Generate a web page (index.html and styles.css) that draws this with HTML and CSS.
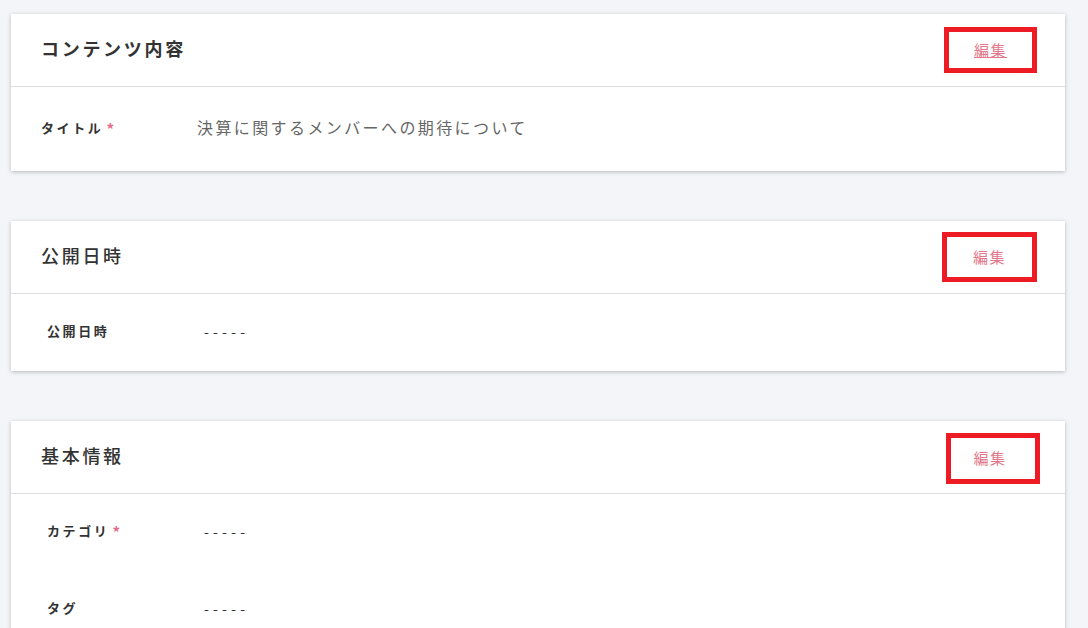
FILE: index.html
```html
<!DOCTYPE html>
<html lang="ja">
  <head>
    <meta charset="utf-8">
    <meta name="viewport" content="width=device-width, initial-scale=1.0">
    <title>コンテンツ編集</title>
    <link rel="stylesheet" href="styles.css">
  </head>
  <body>
    <div class="page">

      <!-- コンテンツ内容 -->
      <section class="card">
        <div class="card-header">
          <h2 class="card-title strong">コンテンツ内容</h2>
          <a class="edit-link active" href="#">編集</a>
        </div>
        <div class="card-body first">
          <div class="field">
            <div class="field-label">タイトル<span class="required">*</span></div>
            <div class="field-value text">決算に関するメンバーへの期待について</div>
          </div>
        </div>
      </section>

      <!-- 公開日時 -->
      <section class="card">
        <div class="card-header">
          <h2 class="card-title">公開日時</h2>
          <a class="edit-link" href="#">編集</a>
        </div>
        <div class="card-body">
          <div class="field">
            <div class="field-label">公開日時</div>
            <div class="field-value">-----</div>
          </div>
        </div>
      </section>

      <!-- 基本情報 -->
      <section class="card">
        <div class="card-header">
          <h2 class="card-title">基本情報</h2>
          <a class="edit-link shift" href="#">編集</a>
        </div>
        <div class="card-body">
          <div class="field">
            <div class="field-label">カテゴリ<span class="required">*</span></div>
            <div class="field-value">-----</div>
          </div>
          <div class="field">
            <div class="field-label">タグ</div>
            <div class="field-value">-----</div>
          </div>
        </div>
      </section>

    </div>
  </body>
</html>
```

FILE: styles.css
```css
/* Basic reset and body styling */
html, body {
  margin: 0;
  padding: 0;
  overflow: hidden;
}
body {
  font-family: "Noto Sans CJK JP", "Noto Sans", sans-serif;
  background: #f4f5f9;
  color: #333;
}
/* Page wrapper, cards are stacked with 50px between them */
.page {
  display: flex;
  flex-direction: column;
  gap: 50px;
  padding: 14px 23px 0 11px;
}
.card {
  background: #fff;
  box-shadow: 0 1px 4px rgba(0,0,0,0.25);
}
/* Header row: title on the left, edit link on the right */
.card-header {
  display: flex;
  align-items: center;
  justify-content: space-between;
  height: 72px;
  padding: 0 28px 0 30px;
  border-bottom: 1px solid #dedede;
}
.card-title {
  margin: 0;
  padding-bottom: 4px;
  font-size: 18px;
  font-weight: 500;
  letter-spacing: 0.15em;
  color: #333;
}
.card-title.strong {
  font-weight: 700;
}
/* The edit link is framed with a red box */
.edit-link {
  display: flex;
  align-items: center;
  justify-content: center;
  width: 95px;
  height: 50px;
  box-sizing: border-box;
  border: 5px solid #ed1c24;
  padding-bottom: 2px;
  font-size: 15px;
  letter-spacing: 0.1em;
  color: #e2788a;
  text-decoration: none;
}
.edit-link.active {
  width: 93px;
  height: 46px;
  text-decoration: underline;
}
.edit-link.shift {
  width: 94px;
  height: 51px;
  margin-right: -3px;
  margin-top: 2px;
  padding-right: 6px;
}
/* Body rows */
.card-body {
  padding: 0 36px;
}
.card-body.first {
  padding: 0 30px;
}
.field {
  display: flex;
  align-items: center;
  height: 77px;
  padding-bottom: 4px;
  box-sizing: border-box;
}
.card-body.first .field {
  height: 84px;
  padding-bottom: 4px;
}
.field-label {
  width: 157px;
  flex-shrink: 0;
  font-size: 13px;
  font-weight: 700;
  letter-spacing: 0.2em;
}
.card-body.first .field-label {
  width: 156px;
}
.required {
  margin-left: 3px;
  font-size: 15px;
  line-height: 1;
  vertical-align: -2px;
  color: #e46a88;
  font-weight: 700;
}
.field-value {
  font-size: 14px;
  letter-spacing: 0.3em;
  color: #333;
}
.field-value.text {
  font-size: 16px;
  letter-spacing: 0.15em;
  color: #666;
}
```
